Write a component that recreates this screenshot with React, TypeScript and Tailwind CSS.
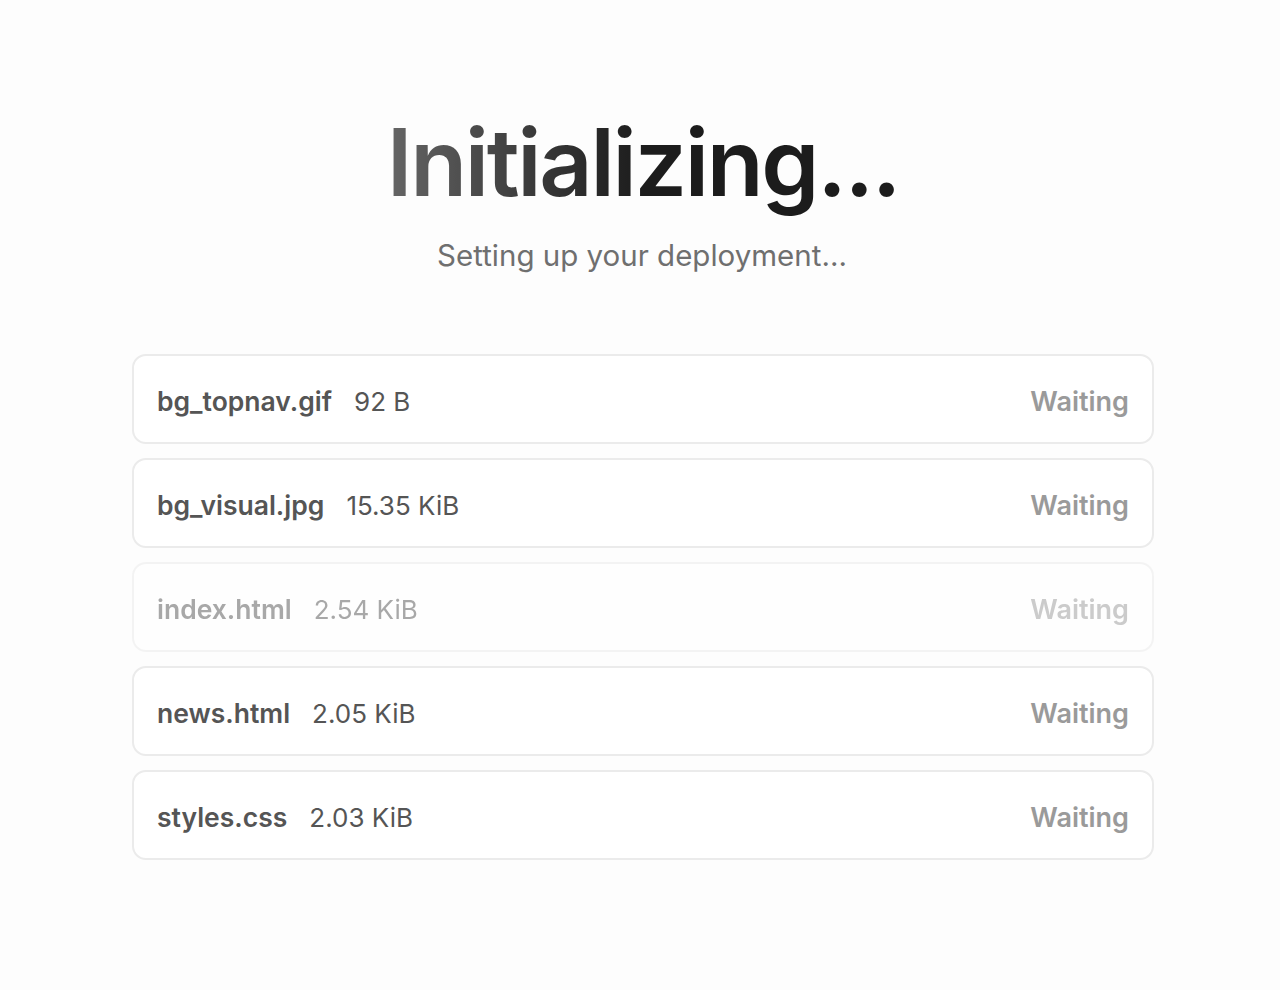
const files = [
  { name: 'bg_topnav.gif', size: '92 B', faded: false },
  { name: 'bg_visual.jpg', size: '15.35 KiB', faded: false },
  { name: 'index.html', size: '2.54 KiB', faded: true },
  { name: 'news.html', size: '2.05 KiB', faded: false },
  { name: 'styles.css', size: '2.03 KiB', faded: false },
];

export default function App() {
  return (
    <div className="min-h-screen bg-[#fdfdfd] font-['Inter',sans-serif] flex flex-col items-center">
      <h1 className="mt-[102px] ml-[6px] text-[93px] leading-[120px] font-semibold tracking-[-0.025em] bg-gradient-to-r from-[#666] via-[#1c1c1c] to-[#1c1c1c] bg-clip-text text-transparent">
        Initializing...
      </h1>
      <p className="mt-[13px] ml-[4px] text-[29.5px] leading-[40px] text-[#6f6f6f]">
        Setting up your deployment...
      </p>
      <div className="mt-[79px] w-[1022px] ml-[6px] flex flex-col gap-[14px]">
        {files.map((f) => (
          <div
            key={f.name}
            className={`h-[90px] rounded-[14px] border-2 border-[#ebebeb] bg-white px-[23px] pt-[3px] flex items-baseline leading-[84px] ${f.faded ? 'opacity-50' : ''}`}
          >
            <span className="text-[26.5px] font-semibold text-[#555]">{f.name}</span>
            <span className="ml-[22px] text-[26px] text-[#555]">{f.size}</span>
            <span className="ml-auto text-[27px] font-semibold text-[#9a9a9a]">Waiting</span>
          </div>
        ))}
      </div>
    </div>
  );
}
